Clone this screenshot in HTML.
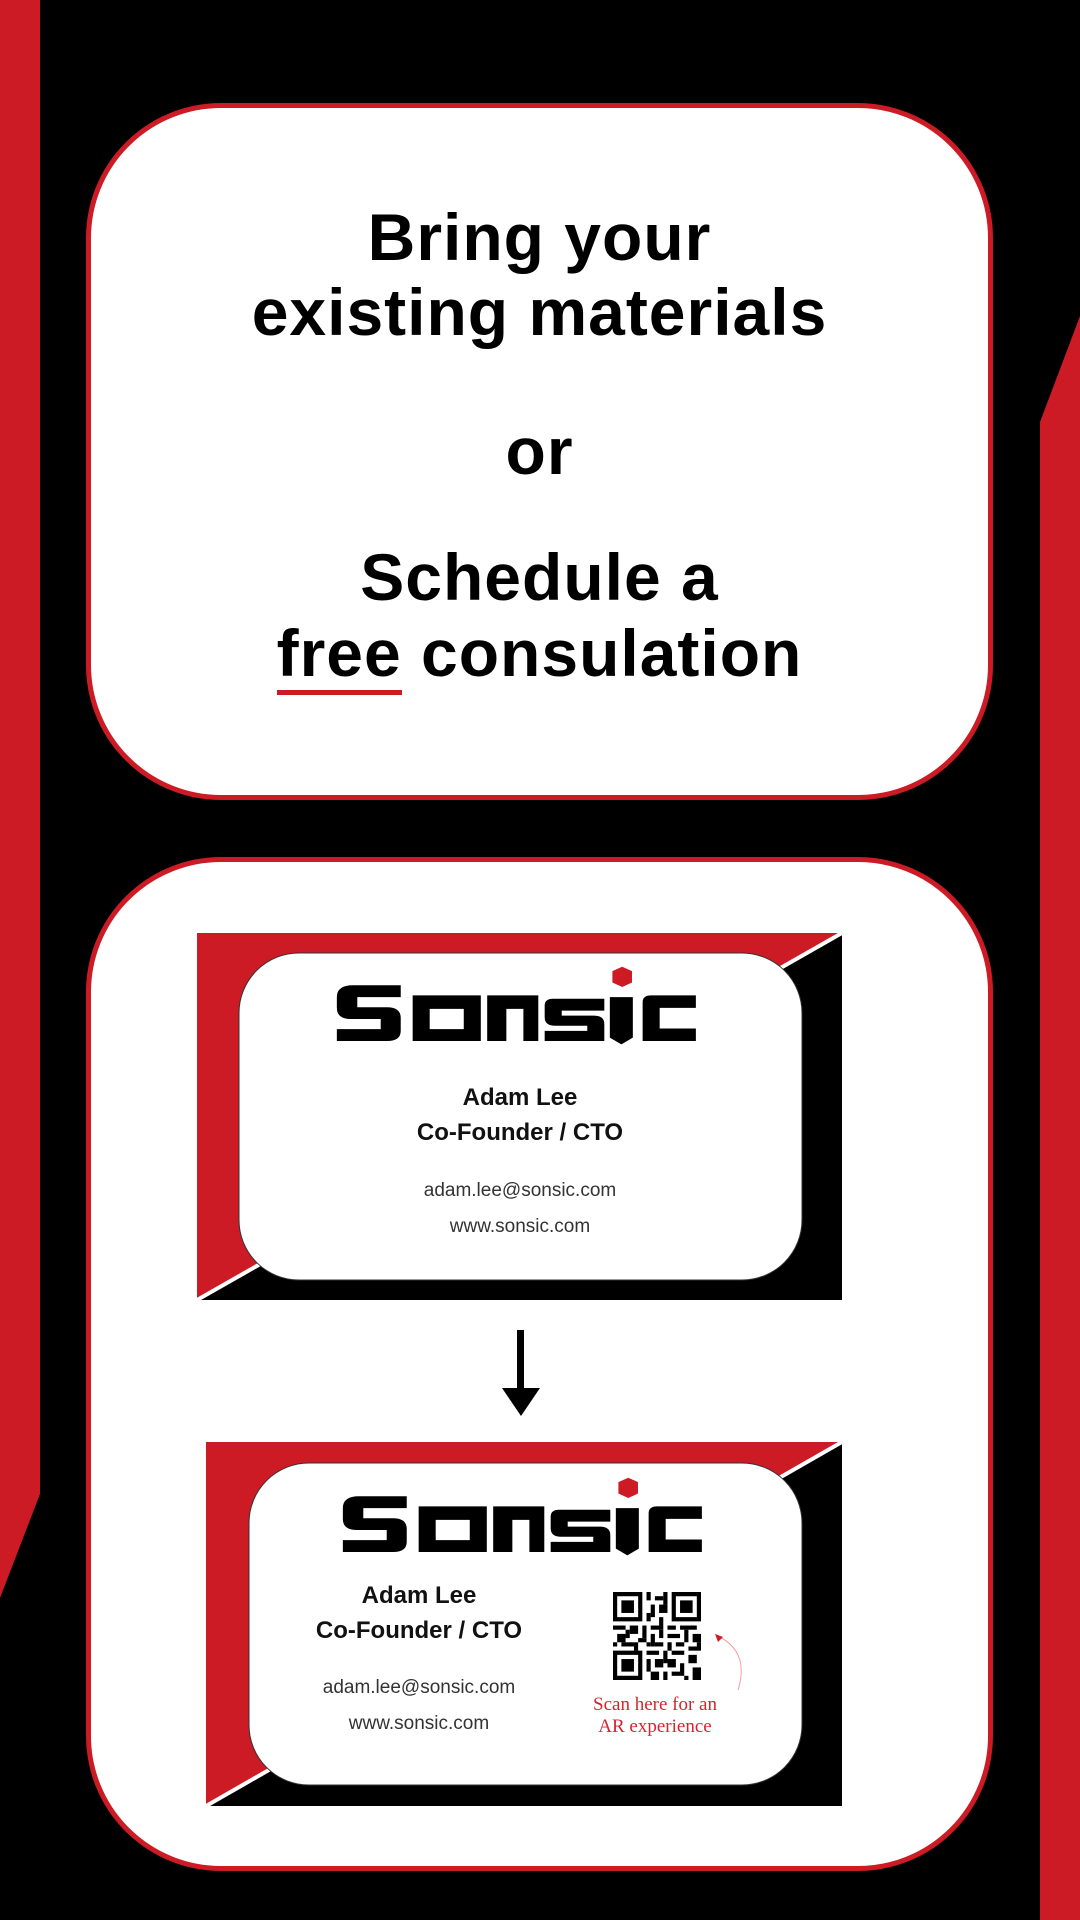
<!DOCTYPE html>
<html><head><meta charset="utf-8"><style>
*{margin:0;padding:0;box-sizing:border-box}
body{width:1080px;height:1920px;background:#000;position:relative;overflow:hidden;font-family:"Liberation Sans",sans-serif}
.box{position:absolute;left:86px;width:907px;background:#fff;border:5px solid #cc1b24;border-radius:135px}
.t{position:absolute;left:0;width:100%;text-align:center;font-weight:bold;color:#000;font-size:66px;line-height:1;letter-spacing:1px}
.card{position:absolute}
.nm{position:absolute;text-align:center;font-weight:bold;font-size:24px;color:#111;line-height:35px}
.ct{position:absolute;text-align:center;font-size:19px;color:#333;line-height:36px}
</style></head><body>
<svg width="1080" height="1920" style="position:absolute;left:0;top:0">
<polygon points="0,0 40,0 40,1494 0,1598" fill="#cc1b24"/>
<polygon points="1040,422 1080,316 1080,1920 1040,1920" fill="#cc1b24"/>
</svg>
<div class="box" style="top:103px;height:697px">
<div class="t" style="top:96px">Bring your</div>
<div class="t" style="top:171px">existing materials</div>
<div class="t" style="top:310px">or</div>
<div class="t" style="top:436px">Schedule a</div>
<div class="t" style="top:512px"><span style="border-bottom:5px solid #cc1b24;padding-bottom:0">free</span> consulation</div>
</div>
<div class="box" style="top:857px;height:1014px"></div>

<!-- card 1 -->
<svg class="card" style="left:197px;top:933px" width="645" height="367">
<polygon points="0,0 645,0 0,367" fill="#cc1b24"/>
<polygon points="645,0 645,367 0,367" fill="#000"/>
<line x1="0" y1="367" x2="645" y2="0" stroke="#fff" stroke-width="4"/>
<rect x="42" y="20" width="563" height="327" rx="60" fill="#fff" stroke="#333" stroke-width="1"/>
</svg>
<svg style="position:absolute;left:336px;top:965px" width="362" height="81" viewBox="360 105 850 240" preserveAspectRatio="none">
<g fill="#000" fill-rule="evenodd">
<path d="M400 165H512V200H410V230H480Q512 230 512 262V300Q512 330 480 330H362V295H465V265H395Q362 265 362 232V200Q362 165 400 165Z"/>
<path d="M540 195H700V330H540Z M580 235V295H660V235Z"/>
<path d="M715 195H835V330H800V235H760V330H715Z"/>
<path d="M870 205H990V240H890V255H965Q990 255 990 280V330H850V300H950V285H875Q850 285 850 260V225Q850 205 870 205Z"/>
<path d="M1003 200H1057V320L1030 340L1003 320Z"/>
<path d="M1100 195H1205V232H1120V293H1205V330H1080V215Q1080 195 1100 195Z"/>
</g>
<path d="M1032 110L1055 123V157L1032 170L1009 157V123Z" fill="#cc1b24"/>
</svg>
<div class="nm" style="left:300px;width:440px;top:1080px">Adam Lee<br>Co-Founder / CTO</div>
<div class="ct" style="left:300px;width:440px;top:1173px">adam.lee@sonsic.com<br>www.sonsic.com</div>

<!-- arrow -->
<svg style="position:absolute;left:500px;top:1330px" width="42" height="90">
<rect x="17" y="0" width="7" height="62" fill="#000"/>
<polygon points="2,58 40,58 21,86" fill="#000"/>
</svg>

<!-- card 2 -->
<svg class="card" style="left:206px;top:1442px" width="636" height="364">
<polygon points="0,0 636,0 0,364" fill="#cc1b24"/>
<polygon points="636,0 636,364 0,364" fill="#000"/>
<line x1="0" y1="364" x2="636" y2="0" stroke="#fff" stroke-width="4"/>
<rect x="43" y="21" width="553" height="322" rx="60" fill="#fff" stroke="#333" stroke-width="1"/>
</svg>
<svg style="position:absolute;left:342px;top:1476px" width="362" height="81" viewBox="360 105 850 240" preserveAspectRatio="none">
<g fill="#000" fill-rule="evenodd">
<path d="M400 165H512V200H410V230H480Q512 230 512 262V300Q512 330 480 330H362V295H465V265H395Q362 265 362 232V200Q362 165 400 165Z"/>
<path d="M540 195H700V330H540Z M580 235V295H660V235Z"/>
<path d="M715 195H835V330H800V235H760V330H715Z"/>
<path d="M870 205H990V240H890V255H965Q990 255 990 280V330H850V300H950V285H875Q850 285 850 260V225Q850 205 870 205Z"/>
<path d="M1003 200H1057V320L1030 340L1003 320Z"/>
<path d="M1100 195H1205V232H1120V293H1205V330H1080V215Q1080 195 1100 195Z"/>
</g>
<path d="M1032 110L1055 123V157L1032 170L1009 157V123Z" fill="#cc1b24"/>
</svg>
<div class="nm" style="left:219px;width:400px;top:1578px">Adam Lee<br>Co-Founder / CTO</div>
<div class="ct" style="left:219px;width:400px;top:1670px">adam.lee@sonsic.com<br>www.sonsic.com</div>

<svg style="position:absolute;left:613px;top:1592px" width="88" height="88" viewBox="0 0 21 21">
<g fill="#000">
<path fill-rule="evenodd" d="M0 0h7v7h-7zM1 1v5h5v-5z M14 0h7v7h-7zM15 1v5h5v-5z M0 14h7v7h-7zM1 15v5h5v-5z"/>
<rect x="2" y="2" width="3" height="3"/><rect x="16" y="2" width="3" height="3"/><rect x="2" y="16" width="3" height="3"/>
<rect x="8" y="0" width="1" height="2"/><rect x="10" y="1" width="2" height="1"/><rect x="9" y="3" width="1" height="3"/><rect x="11" y="3" width="2" height="2"/><rect x="12" y="0" width="1" height="3"/><rect x="8" y="5" width="1" height="2"/><rect x="11" y="6" width="1" height="2"/>
<rect x="0" y="8" width="3" height="1"/><rect x="4" y="8" width="2" height="2"/><rect x="7" y="8" width="1" height="3"/><rect x="9" y="8" width="3" height="1"/><rect x="13" y="8" width="2" height="1"/><rect x="16" y="8" width="4" height="1"/>
<rect x="1" y="10" width="2" height="2"/><rect x="3" y="9" width="1" height="2"/><rect x="6" y="11" width="2" height="1"/><rect x="9" y="10" width="1" height="3"/><rect x="11" y="9" width="1" height="2"/><rect x="13" y="10" width="3" height="1"/><rect x="17" y="9" width="1" height="3"/><rect x="19" y="10" width="2" height="2"/>
<rect x="0" y="12" width="1" height="1"/><rect x="2" y="12" width="3" height="1"/><rect x="5" y="12" width="1" height="2"/><rect x="8" y="12" width="1" height="1"/><rect x="10" y="12" width="2" height="1"/><rect x="13" y="12" width="1" height="2"/><rect x="15" y="12" width="2" height="1"/><rect x="18" y="13" width="3" height="1"/><rect x="20" y="12" width="1" height="1"/>
<rect x="8" y="14" width="3" height="1"/><rect x="12" y="14" width="1" height="3"/><rect x="14" y="14" width="3" height="1"/><rect x="18" y="15" width="2" height="2"/>
<rect x="8" y="16" width="1" height="3"/><rect x="10" y="16" width="2" height="2"/><rect x="13" y="16" width="2" height="2"/><rect x="16" y="17" width="1" height="3"/><rect x="19" y="18" width="2" height="3"/>
<rect x="9" y="19" width="2" height="2"/><rect x="12" y="19" width="1" height="2"/><rect x="14" y="19" width="2" height="1"/><rect x="17" y="20" width="1" height="1"/>
</g>
</svg>
<svg style="position:absolute;left:710px;top:1632px" width="40" height="70">
<path d="M8 4 Q40 20 28 58" fill="none" stroke="#f3a0a5" stroke-width="1"/>
<polygon points="5,2 13,5 8,10" fill="#cc1b24"/>
</svg>
<div style="position:absolute;left:565px;width:180px;top:1694px;text-align:center;font-family:'Liberation Serif',serif;color:#d8232e;font-size:19px;line-height:22px">Scan here for an<br>AR experience</div>
</body></html>
